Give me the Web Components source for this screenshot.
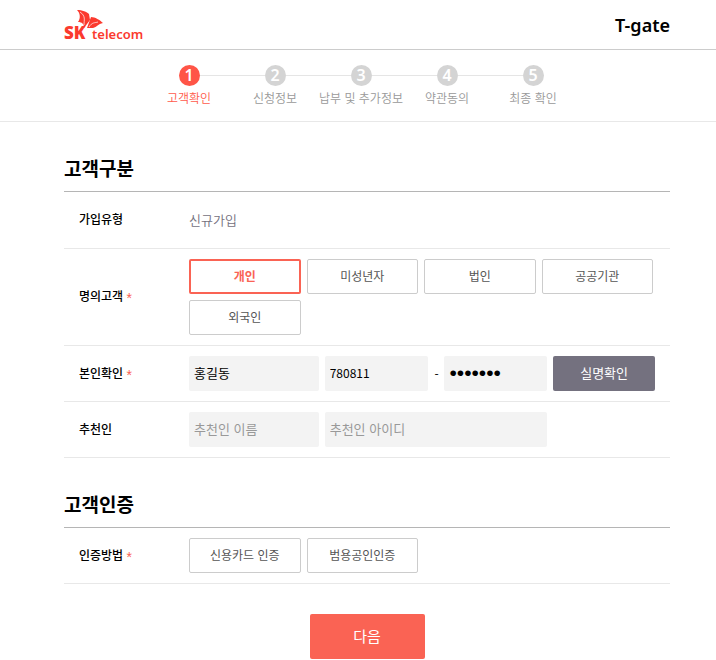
<!DOCTYPE html>
<html lang="ko">
<head>
<meta charset="utf-8">
<meta name="viewport" content="width=device-width, initial-scale=1">
<title>T-gate</title>
<style>
body {
    margin: 0;
    background: #fff;
    color: #000;
    font: 12px/18px "Noto Sans CJK KR", sans-serif;
    --accent: #fa6354;
    --gutter-left: 64px;
    --gutter-right: 46px;
}
main {
    padding: 0 var(--gutter-right) 0 var(--gutter-left);
}
</style>
</head>
<body>

<site-header></site-header>

<step-nav>
    <step-item number="1" current>고객확인</step-item>
    <step-item number="2">신청정보</step-item>
    <step-item number="3">납부 및 추가정보</step-item>
    <step-item number="4">약관동의</step-item>
    <step-item number="5">최종 확인</step-item>
</step-nav>

<main>
    <form-section heading="고객구분">
        <form-row label="가입유형"><plain-value>신규가입</plain-value></form-row>
        <form-row label="명의고객" required>
            <choice-group>
                <choice-button selected>개인</choice-button>
                <choice-button>미성년자</choice-button>
                <choice-button>법인</choice-button>
                <choice-button>공공기관</choice-button>
                <choice-button>외국인</choice-button>
            </choice-group>
        </form-row>
        <form-row label="본인확인" required><identity-fields></identity-fields></form-row>
        <form-row label="추천인"><referrer-fields></referrer-fields></form-row>
    </form-section>

    <form-section heading="고객인증">
        <form-row label="인증방법" required>
            <choice-group>
                <choice-button>신용카드 인증</choice-button>
                <choice-button>범용공인인증</choice-button>
            </choice-group>
        </form-row>
    </form-section>

    <next-button>다음</next-button>
</main>

<script>
'use strict';

function define(name, render) {
    customElements.define(
        name,
        class extends HTMLElement {
            constructor() {
                super();
                this.attachShadow({ mode: 'open' }).innerHTML = render(this);
            }
        }
    );
}

//#region Header

define('site-header', () => `
<style>
:host {
    display: block;
    border-bottom: 1px solid #ccc;
}
header {
    display: flex;
    justify-content: space-between;
    align-items: center;
    height: 49px;
    padding: 0 var(--gutter-right) 0 var(--gutter-left);
}
svg { display: block; }
h1 {
    margin: 0;
    font: 600 18px/24px "Noto Sans", sans-serif;
}
</style>
<header>
    <a href="#" aria-label="SK telecom">
        <svg width="88" height="45" viewBox="0 0 88 45" fill="#fb3a2e">
            <path d="M13 8 C18 8 23 10 25 12 L26 18 L20 26 C20 22 18 20 14 20 C17 16 16 11 13 8 Z"/>
            <path d="M27 15 C31 15 36 18 39 21 C34 22 33 25 29 26 L23 26 Z"/>
            <path d="M16 10 C22 14 20 18 20 23 M25 25 C28 20 31 21 34 20" fill="none" stroke="#fff" stroke-width="0.7"/>
            <text x="0" y="37" font-family="Open Sans" font-size="17" font-weight="800">SK</text>
            <text x="28" y="37" font-family="Noto Sans" font-size="13" font-weight="600">telecom</text>
        </svg>
    </a>
    <h1>T-gate</h1>
</header>
`);

//#endregion

//#region Steps

define('step-nav', () => `
<style>
:host {
    display: block;
    border-bottom: 1px solid #e8e8e8;
}
nav {
    display: flex;
    justify-content: center;
    padding: 15px 0 14px;
    margin-left: 6px;
}
</style>
<nav><slot></slot></nav>
`);

define('step-item', el => `
<style>
:host {
    flex: 0 1 86px;
    display: flex;
    flex-direction: column;
    align-items: center;
    color: #999;
    font-weight: 350;
    white-space: nowrap;
}
:host([current]) { color: #ff5a4c; }
.track {
    align-self: stretch;
    display: grid;
    grid-template-columns: 1fr 21px 1fr;
    align-items: center;
    margin-bottom: 3px;
}
.track::before,
.track::after {
    content: "";
    height: 1px;
    background: #e5e5e5;
}
:host(:first-child) .track::before,
:host(:last-child) .track::after { visibility: hidden; }
b {
    border-radius: 50%;
    background: #d4d4d4;
    color: #fff;
    font: 600 16px/21px "Noto Sans", sans-serif;
    text-align: center;
}
:host([current]) b { background: #ff5547; }
</style>
<div class="track"><b>${el.getAttribute('number')}</b></div>
<span><slot></slot></span>
`);

//#endregion

//#region Form layout

define('form-section', el => `
<style>
:host { display: block; }
h2 {
    margin: 0;
    padding: 32px 0 9px;
    border-bottom: 1px solid #b5b5b5;
    font-weight: 700;
    font-size: 19px;
    line-height: 28px;
}
</style>
<section>
    <h2>${el.getAttribute('heading')}</h2>
    <slot></slot>
</section>
`);

define('form-row', el => `
<style>
:host {
    display: grid;
    grid-template-columns: 110px minmax(0, 1fr);
    align-items: center;
    padding: 10px 15px;
    border-bottom: 1px solid #e8e8e8;
}
.label {
    padding-bottom: 2px;
    font-weight: 500;
}
i {
    color: var(--accent);
    font: 14px/14px "Liberation Sans", sans-serif;
    vertical-align: -2px;
}
</style>
<div class="label">${el.getAttribute('label')}${el.hasAttribute('required') ? ' <i>*</i>' : ''}</div>
<slot></slot>
`);

define('plain-value', () => `
<style>
:host {
    display: block;
    color: #74717d;
    font-weight: 350;
    font-size: 13px;
    line-height: 36px;
}
</style>
<slot></slot>
`);

//#endregion

//#region Controls

define('choice-group', () => `
<style>
:host {
    display: grid;
    grid-template-columns: repeat(4, minmax(0, 1fr));
    gap: 6px;
    padding-right: 2px;
}
</style>
<slot></slot>
`);

define('choice-button', el => `
<style>
:host { display: block; }
button {
    display: block;
    box-sizing: border-box;
    width: 100%;
    height: 35px;
    padding: 0 0 2px;
    border: 1px solid #ccc;
    border-radius: 2px;
    background: #fff;
    color: #555;
    font: inherit;
    cursor: pointer;
}
button[aria-pressed="true"] {
    border: 2px solid var(--accent);
    color: var(--accent);
    font-weight: 700;
}
</style>
<button type="button" aria-pressed="${el.hasAttribute('selected')}"><slot></slot></button>
`);

const FIELD_STYLE = `
:host {
    display: grid;
    grid-template-columns: 130fr 104fr 4px 103fr 102fr;
    align-items: center;
    gap: 6px;
}
input,
button {
    box-sizing: border-box;
    width: 100%;
    min-width: 0;
    height: 35px;
    border: 0;
    border-radius: 2px;
    font: inherit;
    font-size: 13px;
}
input {
    padding: 0 5px 2px;
    background: #f3f3f3;
    color: #000;
}
input::placeholder { color: #999; }
`;

define('identity-fields', () => `
<style>
${FIELD_STYLE}
.number { font-size: 12px; }
input[type="password"] { font: 21px "Liberation Sans", sans-serif; }
button {
    padding: 0 0 2px;
    background: #74717f;
    color: #fff;
    cursor: pointer;
}
</style>
<input type="text" aria-label="이름" value="홍길동">
<input class="number" type="text" aria-label="주민등록번호 앞자리" value="780811">
<span>-</span>
<input type="password" aria-label="주민등록번호 뒷자리" value="1234567">
<button type="button">실명확인</button>
`);

define('referrer-fields', () => `
<style>
${FIELD_STYLE}
.wide { grid-column: 2 / span 3; }
</style>
<input type="text" aria-label="추천인 이름" placeholder="추천인 이름">
<input class="wide" type="text" aria-label="추천인 아이디" placeholder="추천인 아이디">
`);

define('next-button', () => `
<style>
:host {
    display: flex;
    justify-content: center;
    padding: 30px 0 0;
}
button {
    width: 115px;
    height: 45px;
    padding: 0 0 2px;
    border: 0;
    border-radius: 2px;
    background: var(--accent);
    color: #fff;
    font: inherit;
    font-size: 15px;
    cursor: pointer;
}
</style>
<button type="button"><slot></slot></button>
`);

//#endregion
</script>
</body>
</html>
